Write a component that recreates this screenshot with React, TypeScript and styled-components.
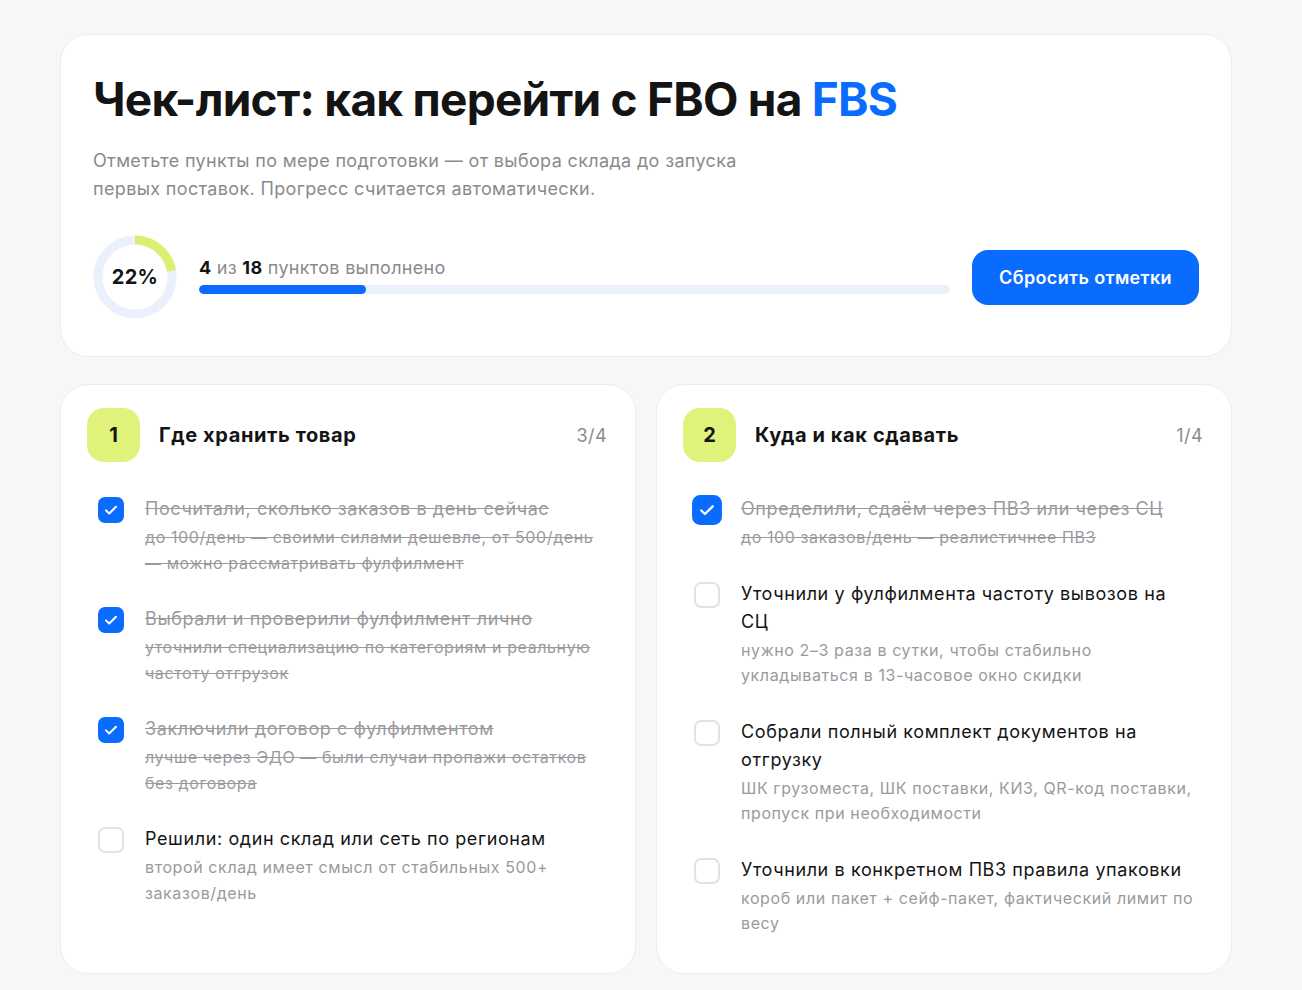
import React from 'react'
import styled, { createGlobalStyle } from 'styled-components'

const GlobalStyle = createGlobalStyle`
  * { box-sizing: border-box; }
  body {
    margin: 0;
    background: #f7f7f8;
    font-family: Inter, 'Noto Sans', 'Liberation Sans', sans-serif;
    color: #141414;
  }
`

const Page = styled.div`
  width: 1172px;
  margin-left: 60px;
  padding: 34px 0 16px;
  display: flex;
  flex-direction: column;
  gap: 27px;
`

const Card = styled.section`
  background: #fff;
  border: 1px solid #ececee;
  border-radius: 28px;
`

const Hero = styled(Card)`
  padding: 37px 32px 37px 32px;
`

const Title = styled.h1`
  margin: 0;
  font-size: 46px;
  line-height: 55px;
  font-weight: 700;
  letter-spacing: -0.75px;
`

const Accent = styled.span`
  color: #0a6cff;
`

const Lead = styled.p`
  margin: 20px 0 0;
  max-width: 680px;
  font-size: 18px;
  line-height: 28px;
  letter-spacing: 0.35px;
  color: #8a8a8e;
`

const ProgressRow = styled.div`
  margin-top: 32px;
  display: flex;
  align-items: center;
  gap: 22px;
`

const Ring = styled.div`
  position: relative;
  width: 84px;
  height: 84px;
  flex-shrink: 0;
`

const RingLabel = styled.span`
  position: absolute;
  inset: 0;
  display: flex;
  align-items: center;
  justify-content: center;
  font-size: 20px;
  font-weight: 700;
  letter-spacing: 0.3px;
`

const Meter = styled.div`
  flex: 1;
  display: flex;
  flex-direction: column;
  gap: 5px;
  margin-top: -5px;
`

const MeterText = styled.div`
  font-size: 18px;
  line-height: 24px;
  letter-spacing: 0.3px;
  color: #8a8a8e;
`

const Strong = styled.b`
  color: #141414;
  font-weight: 700;
`

const Track = styled.div`
  height: 9px;
  border-radius: 5px;
  background: #eaf1fd;
  overflow: hidden;
`

const Fill = styled.div`
  height: 100%;
  border-radius: 5px;
  background: #0a6cff;
`

const ResetButton = styled.button`
  height: 55px;
  padding: 0 27px;
  border: none;
  border-radius: 16px;
  background: #0a6cff;
  color: #fff;
  font-family: inherit;
  font-size: 18px;
  font-weight: 600;
  letter-spacing: 0.35px;
  cursor: pointer;
`

const Columns = styled.div`
  display: grid;
  grid-template-columns: 1fr 1fr;
  gap: 20px;
`

const Section = styled(Card)`
  padding: 23px 28px 22px 26px;
`

const SectionHead = styled.header`
  display: flex;
  align-items: center;
  gap: 19px;
  margin-bottom: 18px;
`

const Badge = styled.span`
  width: 53px;
  height: 54px;
  border-radius: 17px;
  background: #e1f27b;
  display: flex;
  align-items: center;
  justify-content: center;
  font-size: 20px;
  font-weight: 700;
`

const SectionTitle = styled.h2`
  margin: 0;
  flex: 1;
  font-size: 20px;
  font-weight: 700;
  letter-spacing: 0.6px;
`

const Count = styled.span`
  font-size: 18px;
  letter-spacing: 0.4px;
  color: #8a8a8e;
`

const List = styled.ul`
  list-style: none;
  margin: 0;
  padding: 0;
`

const Item = styled.li`
  display: flex;
  gap: 21px;
  padding: 15px 6px 14px 11px;
`

const Box = styled.span<{ $on: boolean; $hover?: boolean }>`
  width: 26px;
  height: 26px;
  margin-top: 2px;
  flex-shrink: 0;
  border-radius: 7px;
  border: ${p => (p.$on ? 'none' : '2px solid #e2e2e4')};
  background: ${p => (p.$on ? '#0a6cff' : '#fff')};
  display: flex;
  align-items: center;
  justify-content: center;
  transform: ${p => (p.$hover ? 'scale(1.15)' : 'none')};
`

const Body = styled.div<{ $done: boolean }>`
  flex: 1;
  text-decoration: ${p => (p.$done ? 'line-through' : 'none')};
  text-decoration-color: #9a9a9e;
`

const ItemTitle = styled.div<{ $done: boolean }>`
  font-size: 18px;
  line-height: 28px;
  letter-spacing: 0.6px;
  color: ${p => (p.$done ? '#9a9a9e' : '#141414')};
`

const ItemNote = styled.div`
  margin-top: 2px;
  font-size: 16px;
  line-height: 25.5px;
  letter-spacing: 0.6px;
  color: #9a9a9e;
`

type Task = { title: string; note: string; done: boolean; hover?: boolean }
type Group = { num: number; title: string; tasks: Task[] }

const groups: Group[] = [
  {
    num: 1,
    title: 'Где хранить товар',
    tasks: [
      {
        title: 'Посчитали, сколько заказов в день сейчас',
        note: 'до 100/день — своими силами дешевле, от 500/день — можно рассматривать фулфилмент',
        done: true,
      },
      {
        title: 'Выбрали и проверили фулфилмент лично',
        note: 'уточнили специализацию по категориям и реальную частоту отгрузок',
        done: true,
      },
      {
        title: 'Заключили договор с фулфилментом',
        note: 'лучше через ЭДО — были случаи пропажи остатков без договора',
        done: true,
      },
      {
        title: 'Решили: один склад или сеть по регионам',
        note: 'второй склад имеет смысл от стабильных 500+ заказов/день',
        done: false,
      },
    ],
  },
  {
    num: 2,
    title: 'Куда и как сдавать',
    tasks: [
      {
        title: 'Определили, сдаём через ПВЗ или через СЦ',
        note: 'до 100 заказов/день — реалистичнее ПВЗ',
        done: true,
        hover: true,
      },
      {
        title: 'Уточнили у фулфилмента частоту вывозов на СЦ',
        note: 'нужно 2–3 раза в сутки, чтобы стабильно укладываться в 13-часовое окно скидки',
        done: false,
      },
      {
        title: 'Собрали полный комплект документов на отгрузку',
        note: 'ШК грузоместа, ШК поставки, КИЗ, QR-код поставки, пропуск при необходимости',
        done: false,
      },
      {
        title: 'Уточнили в конкретном ПВЗ правила упаковки',
        note: 'короб или пакет + сейф-пакет, фактический лимит по весу',
        done: false,
      },
    ],
  },
]

const TOTAL = 18
const DONE = 4

const Check = () => (
  <svg width="16" height="16" viewBox="0 0 16 16" fill="none">
    <path d="M3 8.4l3.2 3.1L13 4.8" stroke="#fff" strokeWidth="2" strokeLinecap="round" strokeLinejoin="round" />
  </svg>
)

const ProgressRing = ({ value }: { value: number }) => {
  const r = 37
  const c = 2 * Math.PI * r
  return (
    <Ring>
      <svg width="84" height="84" viewBox="0 0 84 84">
        <circle cx="42" cy="42" r={r} fill="none" stroke="#eaf1fd" strokeWidth="9" />
        <circle
          cx="42"
          cy="42"
          r={r}
          fill="none"
          stroke="#dcef73"
          strokeWidth="9"
          strokeDasharray={`${c * value} ${c}`}
          transform="rotate(-90 42 42)"
        />
      </svg>
      <RingLabel>{Math.round(value * 100)}%</RingLabel>
    </Ring>
  )
}

const GroupCard = ({ group }: { group: Group }) => {
  const done = group.tasks.filter(t => t.done).length
  return (
    <Section>
      <SectionHead>
        <Badge>{group.num}</Badge>
        <SectionTitle>{group.title}</SectionTitle>
        <Count>
          {done}/{group.tasks.length}
        </Count>
      </SectionHead>
      <List>
        {group.tasks.map(task => (
          <Item key={task.title}>
            <Box $on={task.done} $hover={task.hover}>
              {task.done && <Check />}
            </Box>
            <Body $done={task.done}>
              <ItemTitle $done={task.done}>{task.title}</ItemTitle>
              <ItemNote>{task.note}</ItemNote>
            </Body>
          </Item>
        ))}
      </List>
    </Section>
  )
}

export default function App() {
  const ratio = DONE / TOTAL
  return (
    <Page>
      <GlobalStyle />
      <Hero>
        <Title>
          Чек-лист: как перейти с FBO на <Accent>FBS</Accent>
        </Title>
        <Lead>
          Отметьте пункты по мере подготовки — от выбора склада до запуска первых поставок. Прогресс считается
          автоматически.
        </Lead>
        <ProgressRow>
          <ProgressRing value={ratio} />
          <Meter>
            <MeterText>
              <Strong>{DONE}</Strong> из <Strong>{TOTAL}</Strong> пунктов выполнено
            </MeterText>
            <Track>
              <Fill style={{ width: `${ratio * 100}%` }} />
            </Track>
          </Meter>
          <ResetButton>Сбросить отметки</ResetButton>
        </ProgressRow>
      </Hero>
      <Columns>
        {groups.map(g => (
          <GroupCard key={g.num} group={g} />
        ))}
      </Columns>
    </Page>
  )
}
